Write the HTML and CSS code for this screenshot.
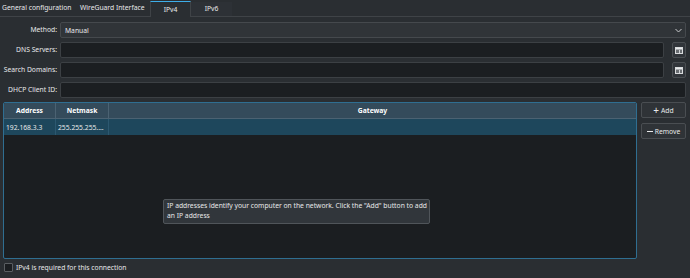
FILE: index.html
```html
<!DOCTYPE html>
<html lang="en">
<head>
    <meta charset="UTF-8">
    <meta name="viewport" content="width=device-width, initial-scale=1.0">
    <title>IPv4 settings</title>
    <link rel="stylesheet" href="styles.css">
</head>
<body>
    <!-- Onglets -->
    <div class="tabs">
        <div class="tab tab-general">General configuration</div>
        <div class="tab tab-wireguard">WireGuard Interface</div>
        <div class="tab tab-active">IPv4</div>
        <div class="tab tab-ipv6">IPv6</div>
    </div>

    <!-- Formulaire -->
    <div class="form">
        <label class="label">Method:</label>
        <div class="combo">
            <span>Manual</span>
            <svg class="chevron" width="7" height="5" viewBox="0 0 7 5"><path d="M0.5 1 L3.5 4 L6.5 1" fill="none" stroke="#c8cacc" stroke-width="1"/></svg>
        </div>

        <label class="label">DNS Servers:</label>
        <div class="field-row">
            <div class="input"></div>
            <div class="icon-btn">
                <svg width="8" height="7" viewBox="0 0 8 7"><rect x="0.5" y="0.5" width="7" height="6" fill="#6a6e72" stroke="#d8dadc"/><rect x="1" y="1" width="6" height="1.5" fill="#e6e8ea"/><rect x="4" y="3" width="0.8" height="3" fill="#e6e8ea"/></svg>
            </div>
        </div>

        <label class="label">Search Domains:</label>
        <div class="field-row">
            <div class="input"></div>
            <div class="icon-btn">
                <svg width="8" height="7" viewBox="0 0 8 7"><rect x="0.5" y="0.5" width="7" height="6" fill="#6a6e72" stroke="#d8dadc"/><rect x="1" y="1" width="6" height="1.5" fill="#e6e8ea"/><rect x="4" y="3" width="0.8" height="3" fill="#e6e8ea"/></svg>
            </div>
        </div>

        <label class="label">DHCP Client ID:</label>
        <div class="input"></div>
    </div>

    <!-- Adresses -->
    <div class="addresses">
        <div class="table-box">
            <table class="table">
                <thead>
                    <tr>
                        <th class="col-address">Address</th>
                        <th class="col-netmask">Netmask</th>
                        <th>Gateway</th>
                    </tr>
                </thead>
                <tbody>
                    <tr class="selected">
                        <td>192.168.3.3</td>
                        <td>255.255.255....</td>
                        <td></td>
                    </tr>
                </tbody>
            </table>
            <div class="tooltip">IP addresses identify your computer on the network. Click the "Add" button to add<br>an IP address</div>
        </div>
        <div class="side-buttons">
            <button class="btn"><span class="btn-icon">+</span> Add</button>
            <button class="btn"><span class="btn-icon minus"></span> Remove</button>
        </div>
    </div>

    <div class="footer">
        <span class="checkbox"></span>
        <span>IPv4 is required for this connection</span>
    </div>
</body>
</html>
```

FILE: styles.css
```css
body {
    margin: 0;
    background-color: #2a2e32;
    color: #e8e9ea;
    font-family: "Noto Sans", sans-serif;
    font-size: 6.75px;
    width: 690px;
    height: 278px;
    overflow: hidden;
}
.tabs {
    display: flex;
    height: 17px;
    border-bottom: 1px solid #3f4347;
    box-sizing: border-box;
}
.tab {
    box-sizing: border-box;
    line-height: 16px;
    white-space: nowrap;
}
.tab-general {
    width: 80px;
    padding-left: 2px;
}
.tab-wireguard {
    width: 70px;
}
.tab-active {
    width: 41px;
    text-align: center;
    margin: 1px 0 -1px 0;
    border-top: 1px solid #3daee9;
    border-left: 1px solid #3f4347;
    border-right: 1px solid #3f4347;
    background-color: #2a2e32;
    line-height: 15px;
}
.tab-ipv6 {
    width: 41px;
    text-align: center;
    margin-top: 2px;
    background-color: #2d3136;
    line-height: 14px;
}
.form {
    display: grid;
    grid-template-columns: 57px 1fr;
    column-gap: 3px;
    row-gap: 4px;
    padding: 5px 4px 0 0;
}
.label {
    text-align: right;
    line-height: 16px;
    height: 16px;
}
.combo {
    height: 16px;
    box-sizing: border-box;
    border: 1px solid #45494d;
    border-radius: 2px;
    background-color: #303438;
    display: flex;
    align-items: center;
    justify-content: space-between;
    padding: 0 3px 0 4px;
}
.field-row {
    display: flex;
    gap: 8px;
}
.input {
    flex: 1;
    height: 16px;
    box-sizing: border-box;
    border: 1px solid #3c4044;
    border-radius: 2px;
    background-color: #1b1e21;
}
.icon-btn {
    width: 14px;
    height: 16px;
    box-sizing: border-box;
    border: 1px solid #4a4e52;
    border-radius: 2px;
    background-color: #31353a;
    display: flex;
    align-items: center;
    justify-content: center;
}
.addresses {
    display: flex;
    gap: 4px;
    padding: 4px 4px 0 3px;
}
.table-box {
    position: relative;
    flex: 1;
    height: 157px;
    box-sizing: border-box;
    border: 1px solid #2f6e91;
    border-radius: 2px;
    background-color: #1b1e21;
    overflow: hidden;
}
.table {
    width: 100%;
    border-collapse: collapse;
    table-layout: fixed;
}
.table th {
    height: 15px;
    padding: 0;
    background-color: #344b5b;
    color: #ffffff;
    font-weight: bold;
    border-right: 1px solid #4b6272;
    border-bottom: 1px solid #4b6272;
}
.table th:last-child {
    border-right: none;
}
.col-address {
    width: 51px;
}
.col-netmask {
    width: 52px;
}
.table td {
    height: 16px;
    padding: 0 2px;
    white-space: nowrap;
    overflow: hidden;
    border-right: 1px solid #2c5870;
}
.table td:last-child {
    border-right: none;
}
.selected {
    background-color: #1e475c;
}
.tooltip {
    position: absolute;
    left: 159px;
    top: 96px;
    width: 267px;
    box-sizing: border-box;
    padding: 1px 2px 2px 3px;
    background-color: #31363b;
    border: 1px solid #50555a;
    border-radius: 2px;
    line-height: 10px;
    white-space: nowrap;
}
.side-buttons {
    display: flex;
    flex-direction: column;
    gap: 5px;
}
.btn {
    width: 45px;
    height: 16px;
    box-sizing: border-box;
    border: 1px solid #4a4e52;
    border-radius: 2px;
    background-color: #2f3337;
    color: #e8e9ea;
    font-family: "Noto Sans", sans-serif;
    font-size: 6.75px;
    padding: 0;
    display: flex;
    align-items: center;
    justify-content: center;
    gap: 2px;
}
.btn-icon {
    font-size: 10px;
    line-height: 10px;
}
.btn-icon.minus {
    width: 6px;
    height: 1px;
    background-color: #e8e9ea;
}
.footer {
    display: flex;
    align-items: center;
    gap: 3px;
    padding: 4px 0 0 4px;
}
.checkbox {
    width: 9px;
    height: 9px;
    box-sizing: border-box;
    border: 1px solid #5a5e62;
    border-radius: 1px;
    background-color: #1b1e21;
}
```
